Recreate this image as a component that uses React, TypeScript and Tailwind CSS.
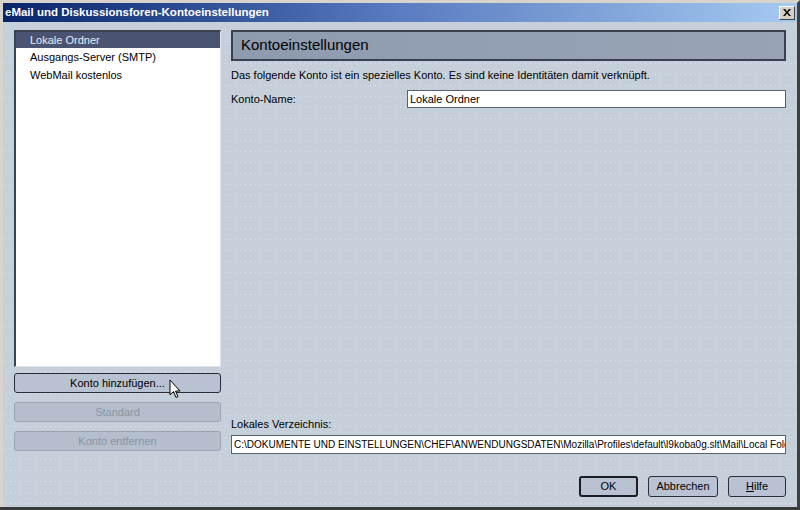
import React from "react";

const font = { fontFamily: "'Liberation Sans', Arial, sans-serif" };

function Btn({ children, disabled, def, className = "" }: { children: React.ReactNode; disabled?: boolean; def?: boolean; className?: string }) {
  return (
    <div
      className={
        "flex items-center justify-center rounded-[3px] text-[11px] " +
        (disabled
          ? "border border-[#9aa4b4] bg-[#b4becc] text-[#8a94a4] "
          : def
          ? "border-2 border-[#1c1c24] bg-[#b8c2d2] text-black "
          : "border border-[#2a2e38] bg-[#b8c2d2] text-black ") +
        className
      }
    >
      {children}
    </div>
  );
}

export default function App() {
  return (
    <div style={font} className="w-[800px] h-[510px] bg-[#3a3a3a] overflow-hidden">
      <div className="w-[800px] h-[507px] border-l-[3px] border-t-[3px] border-r-[3px] border-l-[#d8d4cc] border-t-[#d8d4cc] border-r-[#404040] bg-[#c6d0da] flex flex-col bg-[radial-gradient(circle,#dfe6ee_0.7px,transparent_1px)] bg-[size:5px_11px]">
        {/* title bar */}
        <div className="h-[19px] shrink-0 flex items-center justify-between bg-gradient-to-r from-[#0a246a] via-[#5a7cc0] to-[#a6caf0] pl-[2px] pr-[2px]">
          <span className="text-white font-bold text-[11.5px]">eMail und Diskussionsforen-Kontoeinstellungen</span>
          <div className="w-[16px] h-[14px] bg-[#d4d0c8] border border-t-white border-l-white border-r-[#404040] border-b-[#404040] flex items-center justify-center">
            <svg width="8" height="7" viewBox="0 0 8 7">
              <path d="M0 0h2l2 2.5L6 0h2L5 3.5 8 7H6L4 4.5 2 7H0l3-3.5z" fill="#000" />
            </svg>
          </div>
        </div>
        <div className="flex flex-1 min-h-0 pt-[8px]">
          {/* left column */}
          <div className="w-[207px] shrink-0 ml-[11px] flex flex-col">
            <div className="h-[337px] bg-white border-t-2 border-l-2 border-[#3c4250] border-r border-b border-r-[#e0e4ea] border-b-[#e0e4ea] text-[11px]">
              <div className="h-[16px] bg-[#4a5470] text-[#e8ecf4] pl-[14px] flex items-center">Lokale Ordner</div>
              <div className="h-[18px] pl-[14px] flex items-center">Ausgangs-Server (SMTP)</div>
              <div className="h-[18px] pl-[14px] flex items-center">WebMail kostenlos</div>
            </div>
            <Btn className="mt-[6px] h-[20px] relative">
              Konto hinzufügen...
              <svg className="absolute left-[154px] top-[5px]" width="13" height="20" viewBox="0 0 13 20">
                <path d="M1 1v15l3.5-3.5 2.5 6 2-1-2.5-5.5H11z" fill="#fff" stroke="#000" strokeWidth="1" />
              </svg>
            </Btn>
            <Btn disabled className="mt-[9px] h-[20px]">Standard</Btn>
            <Btn disabled className="mt-[9px] h-[20px]">Konto entfernen</Btn>
          </div>
          {/* right column */}
          <div className="flex-1 min-w-0 ml-[10px] mr-[11px] flex flex-col">
            <div className="h-[31px] border-2 border-[#3a4050] bg-gradient-to-r from-[#8e9aae] to-[#98a4b6] flex items-center pl-[8px] text-[15px] text-black">
              Kontoeinstellungen
            </div>
            <div className="text-[11px] mt-[8px] leading-[13px]">Das folgende Konto ist ein spezielles Konto. Es sind keine Identitäten damit verknüpft.</div>
            <div className="flex items-center mt-[8px] text-[11px]">
              <span className="w-[176px] shrink-0">Konto-Name:</span>
              <div className="flex-1 h-[18px] bg-white border border-[#5a6070] flex items-center pl-[2px]">Lokale Ordner</div>
            </div>
            <div className="flex-1" />
            <div className="text-[11px]">Lokales Verzeichnis:</div>
            <div className="mt-[3px] h-[19px] bg-white border border-[#5a6070] flex items-center pl-[2px] text-[10px] overflow-hidden whitespace-nowrap">
              C:\DOKUMENTE UND EINSTELLUNGEN\CHEF\ANWENDUNGSDATEN\Mozilla\Profiles\default\l9koba0g.slt\Mail\Local Folders
            </div>
            <div className="flex justify-end gap-[10px] mt-[22px] mb-[10px]">
              <Btn def className="w-[59px] h-[21px]">OK</Btn>
              <Btn className="w-[70px] h-[21px]">Abbrechen</Btn>
              <Btn className="w-[58px] h-[21px]"><span><u>H</u>ilfe</span></Btn>
            </div>
          </div>
        </div>
      </div>
    </div>
  );
}
